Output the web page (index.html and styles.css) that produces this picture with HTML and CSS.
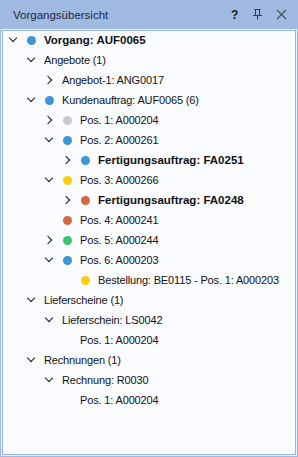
FILE: index.html
```html
<!DOCTYPE html>
<html lang="de">
<head>
    <meta charset="UTF-8">
    <title>Vorgangsübersicht</title>
    <link rel="stylesheet" href="styles.css">
</head>
<body>
    <div class="panel">
        <div class="panel-header">
            <span class="panel-title">Vorgangsübersicht</span>
            <div class="panel-tools">
                <span class="tool-help">?</span>
                <svg class="tool-pin" width="11" height="11" viewBox="0 0 11 11"><path d="M2.5 0.5 H8.5 M3.5 0.5 V6.5 M7.5 0.5 V6.5 M1 6.5 H10 M5.5 6.5 V10.5" stroke="#3a3a3a" stroke-width="1" fill="none"/></svg>
                <svg class="tool-close" width="11" height="11" viewBox="0 0 11 11"><path d="M1 1 L10 10 M10 1 L1 10" stroke="#4d4d4d" stroke-width="1.1" fill="none"/></svg>
            </div>
        </div>
        <div class="panel-body">
            <ul class="tree">
                <li class="row lvl-0"><span class="exp open"></span><span class="dot blue"></span><span class="label bold">Vorgang: AUF0065</span></li>
                <li class="row lvl-1"><span class="exp open"></span><span class="label">Angebote (1)</span></li>
                <li class="row lvl-2"><span class="exp closed"></span><span class="label">Angebot-1: ANG0017</span></li>
                <li class="row lvl-1"><span class="exp open"></span><span class="dot blue"></span><span class="label">Kundenauftrag: AUF0065 (6)</span></li>
                <li class="row lvl-2"><span class="exp closed"></span><span class="dot grey"></span><span class="label">Pos. 1: A000204</span></li>
                <li class="row lvl-2"><span class="exp open"></span><span class="dot blue"></span><span class="label">Pos. 2: A000261</span></li>
                <li class="row lvl-3"><span class="exp closed"></span><span class="dot blue"></span><span class="label bold">Fertigungsauftrag: FA0251</span></li>
                <li class="row lvl-2"><span class="exp open"></span><span class="dot yellow"></span><span class="label">Pos. 3: A000266</span></li>
                <li class="row lvl-3"><span class="exp closed"></span><span class="dot orange"></span><span class="label bold">Fertigungsauftrag: FA0248</span></li>
                <li class="row lvl-2"><span class="exp"></span><span class="dot orange"></span><span class="label">Pos. 4: A000241</span></li>
                <li class="row lvl-2"><span class="exp closed"></span><span class="dot green"></span><span class="label">Pos. 5: A000244</span></li>
                <li class="row lvl-2"><span class="exp open"></span><span class="dot blue"></span><span class="label">Pos. 6: A000203</span></li>
                <li class="row lvl-3"><span class="exp"></span><span class="dot yellow"></span><span class="label">Bestellung: BE0115 - Pos. 1: A000203</span></li>
                <li class="row lvl-1"><span class="exp open"></span><span class="label">Lieferscheine (1)</span></li>
                <li class="row lvl-2"><span class="exp open"></span><span class="label">Lieferschein: LS0042</span></li>
                <li class="row lvl-3"><span class="exp"></span><span class="label">Pos. 1: A000204</span></li>
                <li class="row lvl-1"><span class="exp open"></span><span class="label">Rechnungen (1)</span></li>
                <li class="row lvl-2"><span class="exp open"></span><span class="label">Rechnung: R0030</span></li>
                <li class="row lvl-3"><span class="exp"></span><span class="label">Pos. 1: A000204</span></li>
            </ul>
        </div>
    </div>
</body>
</html>
```

FILE: styles.css
```css
* { margin: 0; padding: 0; box-sizing: border-box; }
body { font-family: "Liberation Sans", Arial, sans-serif; font-size: 11px; color: #000; background: #a0b9e0; }
.panel { width: 298px; height: 457px; display: flex; flex-direction: column; background: #a0b9e0; padding: 0 1px 1px 1px; }
.panel-header { height: 29px; flex: none; display: flex; align-items: center; justify-content: space-between; padding: 0 10px 0 12px; }
.panel-title { font-size: 11.5px; color: #1c2a40; }
.panel-tools { display: flex; align-items: center; gap: 13px; }
.tool-help { font-weight: bold; font-size: 12px; color: #1b1b1b; width: 8px; }
.tool-pin, .tool-close { display: block; }
.panel-body { flex: 1; background: #fafcff; border: 1px solid #eaf0fa; outline: 1px solid #9ab3dc; outline-offset: -2px; }
.tree { list-style: none; }
.row { height: 20px; display: flex; align-items: center; }
.lvl-0 { padding-left: 2px; }
.lvl-1 { padding-left: 20px; }
.lvl-2 { padding-left: 38px; }
.lvl-3 { padding-left: 56px; }
.exp { width: 18px; height: 20px; flex: none; display: flex; align-items: center; justify-content: center; }
.exp.closed::before { content: ""; width: 5px; height: 5px; border-right: 1.5px solid #1a1a1a; border-top: 1.5px solid #1a1a1a; transform: translateX(-1px) rotate(45deg); }
.exp.open::before { content: ""; width: 5px; height: 5px; border-right: 1.5px solid #1a1a1a; border-bottom: 1.5px solid #1a1a1a; transform: translateY(-2px) rotate(45deg); }
.dot { width: 18px; height: 20px; flex: none; display: flex; align-items: center; justify-content: center; }
.dot::before { content: ""; width: 9px; height: 9px; border-radius: 50%; background: currentColor; }
.dot.blue { color: #3b95d8; }
.dot.grey { color: #c9c9c9; }
.dot.yellow { color: #fccf0a; }
.dot.orange { color: #cf6a3e; }
.dot.green { color: #35c76a; }
.label { padding-left: 4px; white-space: nowrap; color: #111; letter-spacing: -0.15px; }
.label.bold { font-weight: bold; font-size: 11.5px; letter-spacing: 0; }
```
